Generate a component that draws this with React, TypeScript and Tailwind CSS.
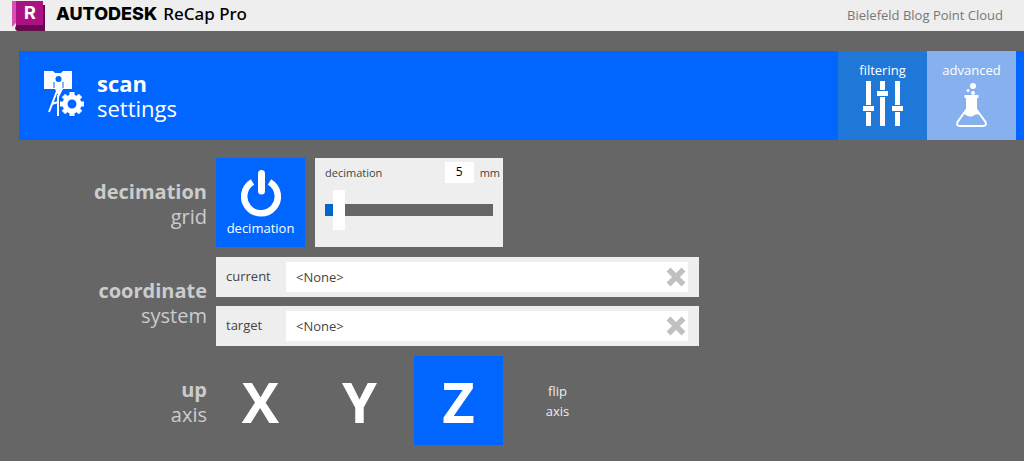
import { useState } from "react";

const tile = "w-[89px] h-[89px] shrink-0 flex flex-col items-center";

// Product logo in the title bar
function RecapLogo() {
  return (
    <svg width="33" height="30" viewBox="0 0 33 30" aria-hidden="true">
      <path d="M0 0 H5 V21 L0 26 Z" fill="#d94fb0" />
      <path d="M4 0 H31 V24 H4 Z" fill="#ab1182" />
      <path d="M4 24 H31 V4 H33 V30 H5 L3 28 Z" fill="#660a4e" />
      <text x="12" y="18" fontSize="18" fontWeight="bold" fontFamily="Inter, sans-serif" fill="#fff">R</text>
    </svg>
  );
}

// Scanner on a tripod with a gear
function ScanIcon() {
  return (
    <svg className="mb-1" width="41" height="46" viewBox="0 0 41 46" aria-hidden="true">
      <path d="M0 0 H9 L11 2 H17 L19 0 H28 V18 H19 L15 26 L11 18 H0 Z" fill="#fff" />
      <circle cx="14.500" cy="8" r="3" fill="#0066ff" />
      <path d="M10 11 V17 M19 11 V17" stroke="#0066ff" strokeWidth="1" />
      <path d="M13 20 L5 41 M14 24 V45 M8 33 L14 31" stroke="#fff" strokeWidth="2" fill="none" />
      <g transform="translate(28 33)">
        <circle r="11" fill="#0066ff" />
        <g fill="#fff">
          {[0, 45, 90, 135, 180, 225, 270, 315].map((a) => (
            <rect key={a} x="-2.500" y="-12" width="5" height="6" transform={`rotate(${a})`} />
          ))}
        </g>
        <circle r="7" fill="none" stroke="#fff" strokeWidth="5" />
      </g>
    </svg>
  );
}

function SlidersIcon() {
  return (
    <svg width="40" height="46" viewBox="0 0 40 46" fill="#fff" aria-hidden="true">
      <path d="M3 0 H8 V24 H3 Z M0 25 H11 V30 H0 Z M3 31 H8 V45 H3 Z" />
      <path d="M17 0 H22 V9 H17 Z M14 10 H25 V15 H14 Z M17 16 H22 V45 H17 Z" />
      <path d="M32 0 H37 V24 H32 Z M29 25 H40 V30 H29 Z M32 31 H37 V45 H32 Z" />
    </svg>
  );
}

function FlaskIcon() {
  return (
    <svg width="33" height="47" viewBox="0 0 33 47" fill="#fff" aria-hidden="true">
      <circle cx="18" cy="5" r="3" />
      <circle cx="13" cy="9.500" r="1.500" />
      <circle cx="18" cy="12" r="2" />
      <path d="M9.500 14 H23.500 V17 H22 V28 L26 34 Q21 32 18 35 Q14 37 8 32 L11 28 V17 H9.500 Z" />
      <path d="M12 17 V28 L2.500 41 Q1 45 5 45 H28 Q32 45 30.500 41 L21 28 V17" fill="none" stroke="#fff" strokeWidth="2" />
    </svg>
  );
}

function PowerIcon() {
  return (
    <svg width="40" height="47" viewBox="0 0 40 47" fill="none" stroke="#fff" aria-hidden="true">
      <path d="M11.500 12 A16.800 16.800 0 1 0 28.500 12" strokeWidth="6.500" />
      <path d="M20.500 3.500 V21" strokeWidth="7" strokeLinecap="round" />
    </svg>
  );
}

function RowLabel({ title, sub }: { title: string; sub: string }) {
  return (
    <h2 className="w-[188px] shrink-0 pt-[3px] text-right text-xl leading-[25px] text-[#cccccc]">
      <span className="block font-bold">{title}</span>
      <span className="block font-normal">{sub}</span>
    </h2>
  );
}

function CoordinateField({ name }: { name: string }) {
  const [value, setValue] = useState("<None>");
  return (
    <div className="flex h-10 items-center bg-[#eeeeee] pl-[10px] pr-[11px] text-[13px] text-[#444444]">
      <label htmlFor={name} className="w-[60px]">{name}</label>
      <div className="flex h-[30px] flex-1 items-center bg-white pr-[2px]">
        <input id={name} value={value} onChange={(e) => setValue(e.target.value)} className="h-full min-w-0 flex-1 bg-white pl-[10px] outline-none" />
        <button type="button" aria-label={`clear ${name}`} onClick={() => setValue("<None>")}>
          <svg width="20" height="20" viewBox="0 0 20 20" stroke="#c0c0c0" strokeWidth="5.500" aria-hidden="true">
            <path d="M2.500 2.500 L17.500 17.500 M17.500 2.500 L2.500 17.500" />
          </svg>
        </button>
      </div>
    </div>
  );
}

export default function App() {
  const [distance, setDistance] = useState(5);
  const [axis, setAxis] = useState("Z");

  return (
    <div className="min-h-screen bg-[#666666] font-['Open_Sans',sans-serif]">
      {/* Title bar */}
      <header className="flex h-[31px] items-center justify-between bg-[#eeeeee] pl-3 pr-[21px]">
        <div className="flex items-center gap-[11px]">
          <RecapLogo />
          <h1 className="flex items-baseline gap-[6px] pb-1 text-lg leading-6 text-black">
            <span className="font-['Inter',sans-serif] font-extrabold">AUTODESK</span>
            <span className="font-['Noto_Sans',sans-serif] text-[17px] font-medium">ReCap Pro</span>
          </h1>
        </div>
        <span className="text-[13px] text-[#777777]">Bielefeld Blog Point Cloud</span>
      </header>

      <main className="pl-[19px] pt-5">
        {/* Banner with the settings tabs */}
        <div className="flex h-[89px] bg-[#0066ff] pr-2 text-white">
          <div className="flex flex-1 items-center gap-3 pl-[25px]">
            <ScanIcon />
            <div className="text-[22px] leading-[25px]">
              <div className="font-bold">scan</div>
              <div>settings</div>
            </div>
          </div>
          <button type="button" className={`${tile} gap-[2px] bg-[#1f78d8] pt-[10px] text-[13px] leading-[18px]`}>
            filtering
            <SlidersIcon />
          </button>
          <button type="button" className={`${tile} gap-[2px] bg-[#86b1ee] pt-[10px] text-[13px] leading-[18px]`}>
            advanced
            <FlaskIcon />
          </button>
        </div>

        <div className="mt-[18px] flex flex-col gap-[10px]">
          {/* Decimation */}
          <section className="flex items-center gap-[9px]">
            <RowLabel title="decimation" sub="grid" />
            <div className="flex gap-[10px]">
              <button type="button" className={`${tile} gap-[2px] bg-[#0066ff] pt-3 text-[13px] leading-[18px] text-white`}>
                <PowerIcon />
                decimation
              </button>
              <div className="h-[89px] w-[188px] bg-[#eeeeee] pl-[10px] pr-[3px] pt-1 text-[11px] text-[#444444]">
                <div className="flex items-center">
                  <label htmlFor="distance" className="flex-1 pt-[2px]">decimation</label>
                  <input
                    id="distance"
                    value={distance}
                    onChange={(e) => setDistance(Number(e.target.value) || 0)}
                    className="mr-[6px] h-[21px] w-[29px] bg-white pb-[2px] text-center text-xs text-black outline-none"
                  />
                  <span className="pt-[2px]">mm</span>
                </div>
                <input
                  type="range"
                  min="0"
                  max="100"
                  value={distance}
                  onChange={(e) => setDistance(Number(e.target.value))}
                  aria-label="decimation distance"
                  className="mt-[7px] block h-10 w-[168px] appearance-none bg-transparent [&::-webkit-slider-runnable-track]:h-3 [&::-webkit-slider-runnable-track]:bg-[linear-gradient(to_right,#0066cc_8px,#666666_8px)] [&::-webkit-slider-thumb]:-mt-[14px] [&::-webkit-slider-thumb]:h-10 [&::-webkit-slider-thumb]:w-3 [&::-webkit-slider-thumb]:appearance-none [&::-webkit-slider-thumb]:bg-white"
                />
              </div>
            </div>
          </section>

          {/* Coordinate system */}
          <section className="flex items-center gap-[9px]">
            <RowLabel title="coordinate" sub="system" />
            <div className="flex w-[483px] flex-col gap-[9px]">
              <CoordinateField name="current" />
              <CoordinateField name="target" />
            </div>
          </section>

          {/* Up axis */}
          <section className="flex items-center gap-[9px]">
            <RowLabel title="up" sub="axis" />
            <div className="flex gap-[10px] text-white">
              {["X", "Y", "Z"].map((a) => (
                <button
                  key={a}
                  type="button"
                  onClick={() => setAxis(a)}
                  className={`${tile} justify-center text-[56px] leading-none font-bold ${axis === a ? "bg-[#0066ff]" : ""}`}
                >
                  {a}
                </button>
              ))}
              <button type="button" className={`${tile} justify-center text-[13px] leading-5 text-[#eeeeee]`}>
                <span>flip</span>
                <span>axis</span>
              </button>
            </div>
          </section>
        </div>
      </main>
    </div>
  );
}
